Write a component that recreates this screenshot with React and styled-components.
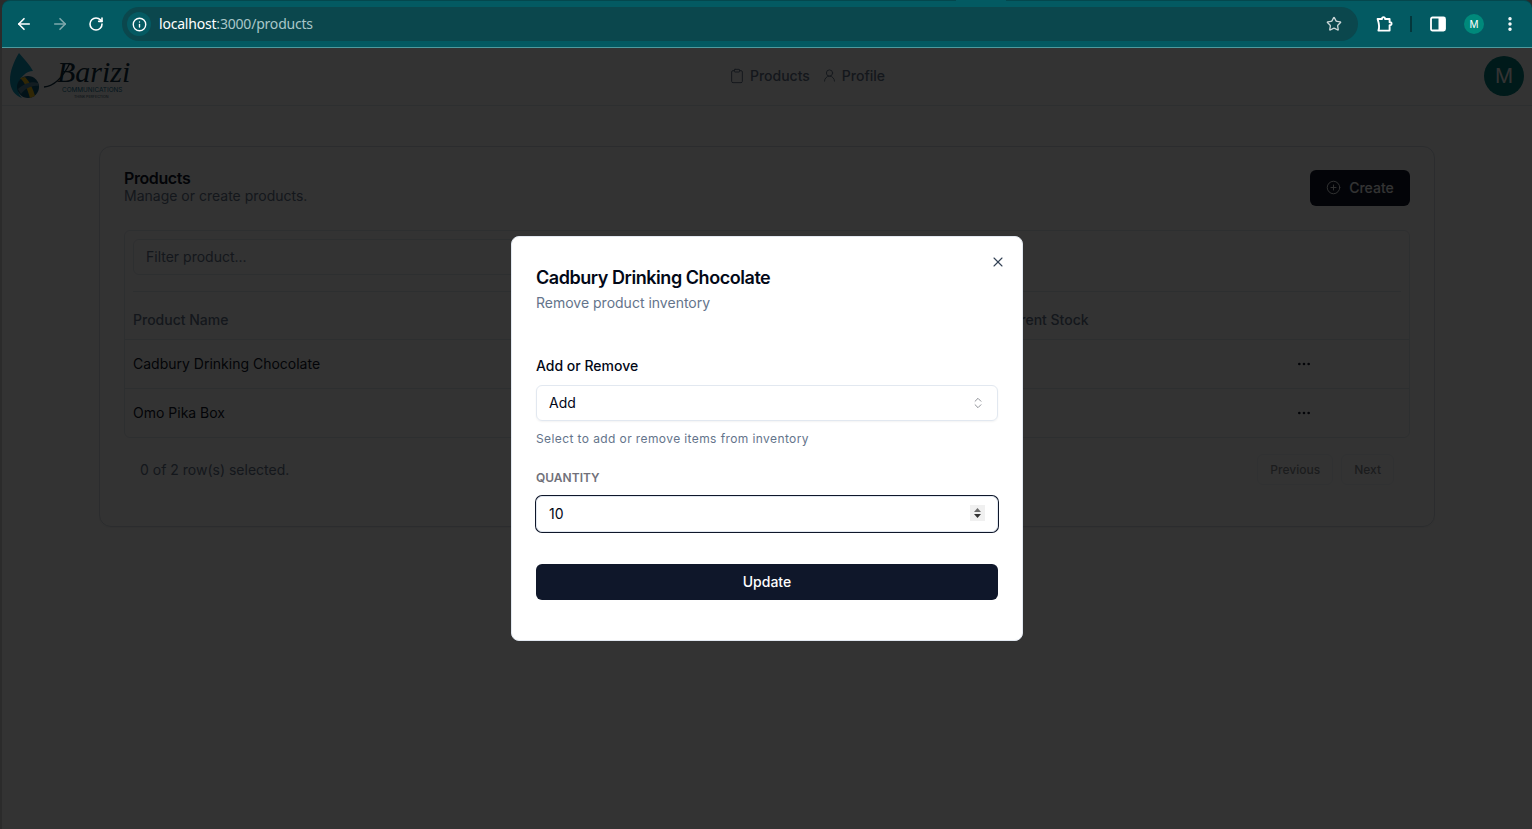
import React from "react";
import styled, { createGlobalStyle } from "styled-components";
import {
  ArrowLeft,
  ArrowRight,
  RotateCw,
  Info,
  Star,
  EllipsisVertical,
  Clipboard,
  UserRound,
  CirclePlus,
  Ellipsis,
  X,
  ChevronsUpDown,
} from "lucide-react";

const Global = createGlobalStyle`
  html, body { margin: 0; padding: 0; height: 100%; overflow: hidden; background: #333; }
  * { box-sizing: border-box; }
  body { font-family: Inter, "Liberation Sans", sans-serif; }
`;

const Windowed = styled.div`
  width: 1532px;
  height: 829px;
  display: flex;
  flex-direction: column;
  background: #2b2b2b;
  overflow: hidden;
`;

const Chrome = styled.header`
  position: relative;
  height: 48px;
  flex: none;
  margin-left: 2px;
  display: flex;
  align-items: center;
  background: #035a62;
  border-top: 1px solid #04474d;
  border-bottom: 1px solid #4d9a9e;
  border-radius: 8px 8px 0 0;
  padding: 0 0 0 10px;
  color: #fff;
`;

const TabNotch = styled.span`
  position: absolute;
  top: -1px;
  left: 954px;
  width: 50px;
  height: 1px;
  background: #035a62;
`;

const NavIcon = styled.span`
  width: 24px;
  height: 24px;
  flex: none;
  display: flex;
  align-items: center;
  justify-content: center;
  margin-right: 12px;
  color: ${(p) => (p.$dim ? "#7fa9ad" : "#fff")};
`;

const Omnibox = styled.div`
  width: 1236px;
  height: 34px;
  margin-left: 2px;
  flex: none;
  display: flex;
  align-items: center;
  border-radius: 17px;
  background: #0b474d;
  padding: 0 16px 0 5px;
`;

const SiteInfo = styled.span`
  width: 24px;
  height: 24px;
  border-radius: 50%;
  background: #055a62;
  display: flex;
  align-items: center;
  justify-content: center;
  margin-right: 8px;
`;

const Url = styled.span`
  font-family: "Noto Sans", sans-serif;
  font-size: 14px;
  line-height: 18px;
  letter-spacing: -0.2px;
  color: #a9c6c8;
  flex: 1;
  b { font-weight: 400; color: #fff; }
`;

const ChromeActions = styled.div`
  flex: 1;
  display: flex;
  align-items: center;
  padding-left: 18px;
`;

const Separator = styled.span`
  width: 2px;
  height: 16px;
  background: #04373c;
  margin: 0 18px 0 16px;
`;

const ProfileDot = styled.span`
  width: 20px;
  height: 20px;
  border-radius: 50%;
  background: #00897b;
  color: #fff;
  font-size: 10px;
  display: flex;
  align-items: center;
  justify-content: center;
  margin: 0 17px 0 18px;
`;

const Viewport = styled.div`
  position: relative;
  flex: 1;
  margin-left: 2px;
  background: #fff;
  min-height: 0;
`;

const Nav = styled.nav`
  height: 58px;
  display: flex;
  align-items: center;
  justify-content: space-between;
  border-bottom: 1px solid #e2e8f0;
  padding: 0 8px 2px;
`;

const NavLinks = styled.div`
  display: flex;
  align-items: center;
  gap: 12px;
  margin-left: -4px;
`;

const NavLink = styled.a`
  display: flex;
  align-items: center;
  gap: 5px;
  font-size: 14px;
  font-weight: 500;
  color: #64748b;
`;

const Avatar = styled.span`
  width: 40px;
  height: 40px;
  border-radius: 50%;
  background: #008080;
  color: #fff;
  font-size: 20px;
  display: flex;
  align-items: center;
  justify-content: center;
`;

const Logo = styled.svg`
  display: block;
  width: 124px;
  height: 50px;
`;

const Main = styled.main`
  padding: 40px 97px 0;
`;

const Card = styled.section`
  height: 381px;
  border: 1px solid #d5dbe3;
  border-radius: 12px;
  padding: 23px 24px;
  box-shadow: 0 1px 2px rgba(0, 0, 0, 0.05);
`;

const CardHead = styled.div`
  display: flex;
  justify-content: space-between;
  align-items: flex-start;
  height: 60px;
`;

const CardTitle = styled.h2`
  margin: -1px 0 0;
  font-size: 16px;
  line-height: 19px;
  font-weight: 600;
  letter-spacing: -0.4px;
  color: #0f172a;
`;

const CardDesc = styled.p`
  margin: 0;
  font-size: 14px;
  line-height: 16px;
  color: #64748b;
`;

const CreateButton = styled.button`
  width: 100px;
  height: 36px;
  border: 0;
  border-radius: 6px;
  padding: 0 0 1px;
  background: #0f172a;
  color: #fff;
  font: 500 14px Inter, sans-serif;
  display: flex;
  align-items: center;
  justify-content: center;
  gap: 8px;
`;

const TableBox = styled.div`
  border: 1px solid #e2e8f0;
  border-radius: 6px;
  height: 208px;
`;

const FilterArea = styled.div`
  margin: 0 8px;
  padding: 8px 0 16px;
  border-bottom: 1px solid #e2e8f0;
`;

const Filter = styled.div`
  width: 384px;
  height: 36px;
  border: 1px solid #e2e8f0;
  border-radius: 6px;
  padding: 0 12px 1px;
  display: flex;
  align-items: center;
  font-size: 14px;
  color: #64748b;
`;

const Row = styled.div`
  display: grid;
  grid-template-columns: 863px 292px 1fr;
  align-items: center;
  height: ${(p) => p.$h}px;
  border-bottom: ${(p) => (p.$last ? "0" : "1px solid #e2e8f0")};
  padding: ${(p) => (p.$head ? "8px 0 0 8px" : p.$last ? "0 0 2px 8px" : "0 0 1px 8px")};
  font-size: 14px;
  color: ${(p) => (p.$head ? "#64748b" : "#0f172a")};
  font-weight: ${(p) => (p.$head ? 500 : 400)};
`;

const Dots = styled.span`
  width: 32px;
  display: flex;
  justify-content: center;
  color: #0f172a;
`;

const Footer = styled.div`
  display: flex;
  align-items: center;
  justify-content: space-between;
  padding: 16px 16px 0;
`;

const Selected = styled.span`
  font-size: 14px;
  color: #64748b;
`;

const Pager = styled.div`
  display: flex;
  gap: 8px;
`;

const PagerButton = styled.span`
  height: 31px;
  border: 1px solid #e2e8f0;
  border-radius: 6px;
  padding: 0 12px;
  display: flex;
  align-items: center;
  font-size: 12px;
  font-weight: 500;
  color: #0f172a;
  opacity: 0.5;
`;

const Overlay = styled.div`
  position: absolute;
  inset: 0;
  background: rgba(0, 0, 0, 0.8);
  display: flex;
  align-items: center;
  justify-content: center;
`;

const Dialog = styled.div`
  position: relative;
  width: 512px;
  height: 405px;
  background: #fff;
  border: 1px solid #e2e8f0;
  border-radius: 8px;
  padding: 29px 24px 0;
  color: #020817;
`;

const CloseButton = styled.span`
  position: absolute;
  top: 17px;
  right: 16px;
  display: flex;
  color: #334155;
`;

const DialogTitle = styled.h3`
  margin: 0;
  font-size: 18px;
  line-height: 24px;
  font-weight: 600;
  letter-spacing: -0.45px;
`;

const DialogDesc = styled.p`
  margin: 3px 0 0;
  font-size: 14px;
  line-height: 20px;
  color: #64748b;
`;

const FieldLabel = styled.label`
  display: block;
  margin-top: 43px;
  font-size: 14px;
  line-height: 20px;
  font-weight: 500;
`;

const SelectBox = styled.div`
  margin-top: 9px;
  height: 36px;
  border: 1px solid #e2e8f0;
  border-radius: 6px;
  box-shadow: 0 1px 2px rgba(0, 0, 0, 0.05);
  padding: 0 12px;
  display: flex;
  align-items: center;
  justify-content: space-between;
  font-size: 14px;
`;

const SelectValue = styled.span`
  margin-bottom: 2px;
`;

const Hint = styled.p`
  margin: 9px 0 0;
  font-size: 12px;
  line-height: 18px;
  letter-spacing: 0.4px;
  color: #64748b;
`;

const QuantityLabel = styled.label`
  display: block;
  margin-top: 22px;
  font-size: 12px;
  line-height: 16px;
  font-weight: 600;
  color: #71717a;
`;

const NumberField = styled.div`
  position: relative;
  margin-top: 10px;
`;

const NumberInput = styled.input`
  display: block;
  width: 462px;
  height: 36px;
  border: 1px solid #e2e8f0;
  border-radius: 6px;
  outline: 0;
  box-shadow: 0 0 0 1px #0f172a;
  padding: 0 12px 1px;
  font: 400 14px Inter, sans-serif;
  color: #020817;
  background: #fff;
  appearance: textfield;
  &::-webkit-inner-spin-button { appearance: none; margin: 0; }
`;

const Spinner = styled.span`
  position: absolute;
  top: 9px;
  right: 13px;
  width: 15px;
  height: 16px;
  background: #f0f0f0;
  display: flex;
  align-items: center;
  justify-content: center;
`;

const SubmitButton = styled.button`
  display: block;
  width: 462px;
  height: 36px;
  margin-top: 32px;
  border: 0;
  border-radius: 6px;
  padding: 0 0 2px;
  background: #0f172a;
  color: #fff;
  font: 450 14px Inter, sans-serif;
`;

const BariziLogo = () => (
  <Logo viewBox="0 0 124 50">
    <path d="M9 2 C14 8 20 14 23 20 C17 20 9 26 8 35 C7.5 40 9 44 12 47 C5 45 0 38 0 29 C0 20 4 10 9 2 Z" fill="#0e9fc4" />
    <circle cx="18" cy="36" r="11" fill="#0c5a78" />
    <path d="M10 27 C15 31 18 40 20 47 L25 45 C23 38 20 31 15 26 Z" fill="#f4c21c" />
    <path d="M8 38 C14 33 21 30 28 32 L28.5 35 C21 34 15 38 11 43 Z" fill="#5a8ea3" />
    <text x="47" y="31" fontFamily="Liberation Serif, serif" fontStyle="italic" fontSize="30" fill="#0f2f40">Barizi</text>
    <path d="M34 36 C46 35 54 24 60 12" stroke="#0f2f40" strokeWidth="1.4" fill="none" />
    <text x="52" y="41" fontFamily="Inter, sans-serif" fontSize="6.4" fill="#0d6f8f">COMMUNICATIONS</text>
    <text x="64" y="46.5" fontFamily="Inter, sans-serif" fontSize="3.6" fill="#1b4a60">THINK PERFECTION</text>
  </Logo>
);

const ExtensionIcon = () => (
  <svg width="18" height="18" viewBox="0 0 18 18" fill="none" stroke="#fff" strokeWidth="1.9" strokeLinejoin="round">
    <path d="M1.6 4 H6 C5.6 1.6 9.4 1.6 9 4 H13.6 V7.2 C16.2 6.8 16.2 10.6 13.6 10.2 V15.6 H2.4 C3.6 12.8 3.2 9 1.6 4 Z" />
  </svg>
);

const PanelIcon = () => (
  <svg width="16" height="16" viewBox="0 0 16 16">
    <rect x="1" y="1.5" width="14" height="13" rx="1.5" fill="none" stroke="#fff" strokeWidth="1.8" />
    <rect x="8.5" y="1.5" width="6.5" height="13" fill="#fff" />
  </svg>
);

const SpinArrows = () => (
  <svg width="9" height="12" viewBox="0 0 9 12">
    <path d="M4.5 1 L8 5 H1 Z" fill="#6b6b6b" />
    <path d="M4.5 11 L8 7 H1 Z" fill="#333" />
  </svg>
);

export default function App() {
  return (
    <Windowed>
      <Global />
      <Chrome>
        <TabNotch />
        <NavIcon><ArrowLeft size={18} strokeWidth={2.2} /></NavIcon>
        <NavIcon $dim><ArrowRight size={18} strokeWidth={2.2} /></NavIcon>
        <NavIcon><RotateCw size={16} strokeWidth={2.4} /></NavIcon>
        <Omnibox>
          <SiteInfo><Info size={15} strokeWidth={2.2} color="#fff" /></SiteInfo>
          <Url><b>localhost</b>:3000/products</Url>
          <Star size={16} strokeWidth={2} color="#c9d5d6" />
        </Omnibox>
        <ChromeActions>
          <ExtensionIcon />
          <Separator />
          <PanelIcon />
          <ProfileDot>M</ProfileDot>
          <EllipsisVertical size={18} strokeWidth={2.6} color="#fff" />
        </ChromeActions>
      </Chrome>
      <Viewport>
        <Nav>
          <BariziLogo />
          <NavLinks>
            <NavLink><Clipboard size={16} strokeWidth={1.5} />Products</NavLink>
            <NavLink><UserRound size={15} strokeWidth={1.5} />Profile</NavLink>
          </NavLinks>
          <Avatar>M</Avatar>
        </Nav>
        <Main>
          <Card>
            <CardHead>
              <div>
                <CardTitle>Products</CardTitle>
                <CardDesc>Manage or create products.</CardDesc>
              </div>
              <CreateButton><CirclePlus size={15} strokeWidth={1.5} />Create</CreateButton>
            </CardHead>
            <TableBox>
              <FilterArea><Filter>Filter product...</Filter></FilterArea>
              <Row $head $h={48}><span>Product Name</span><span>Current Stock</span><span /></Row>
              <Row $h={49}><span>Cadbury Drinking Chocolate</span><span /><Dots><Ellipsis size={16} strokeWidth={2} /></Dots></Row>
              <Row $h={49} $last><span>Omo Pika Box</span><span /><Dots><Ellipsis size={16} strokeWidth={2} /></Dots></Row>
            </TableBox>
            <Footer>
              <Selected>0 of 2 row(s) selected.</Selected>
              <Pager>
                <PagerButton>Previous</PagerButton>
                <PagerButton>Next</PagerButton>
              </Pager>
            </Footer>
          </Card>
        </Main>
        <Overlay>
          <Dialog>
            <CloseButton><X size={16} strokeWidth={1.6} /></CloseButton>
            <DialogTitle>Cadbury Drinking Chocolate</DialogTitle>
            <DialogDesc>Remove product inventory</DialogDesc>
            <FieldLabel>Add or Remove</FieldLabel>
            <SelectBox><SelectValue>Add</SelectValue><ChevronsUpDown size={14} strokeWidth={1.5} opacity={0.5} /></SelectBox>
            <Hint>Select to add or remove items from inventory</Hint>
            <QuantityLabel>QUANTITY</QuantityLabel>
            <NumberField>
              <NumberInput type="number" defaultValue={10} />
              <Spinner><SpinArrows /></Spinner>
            </NumberField>
            <SubmitButton>Update</SubmitButton>
          </Dialog>
        </Overlay>
      </Viewport>
    </Windowed>
  );
}
